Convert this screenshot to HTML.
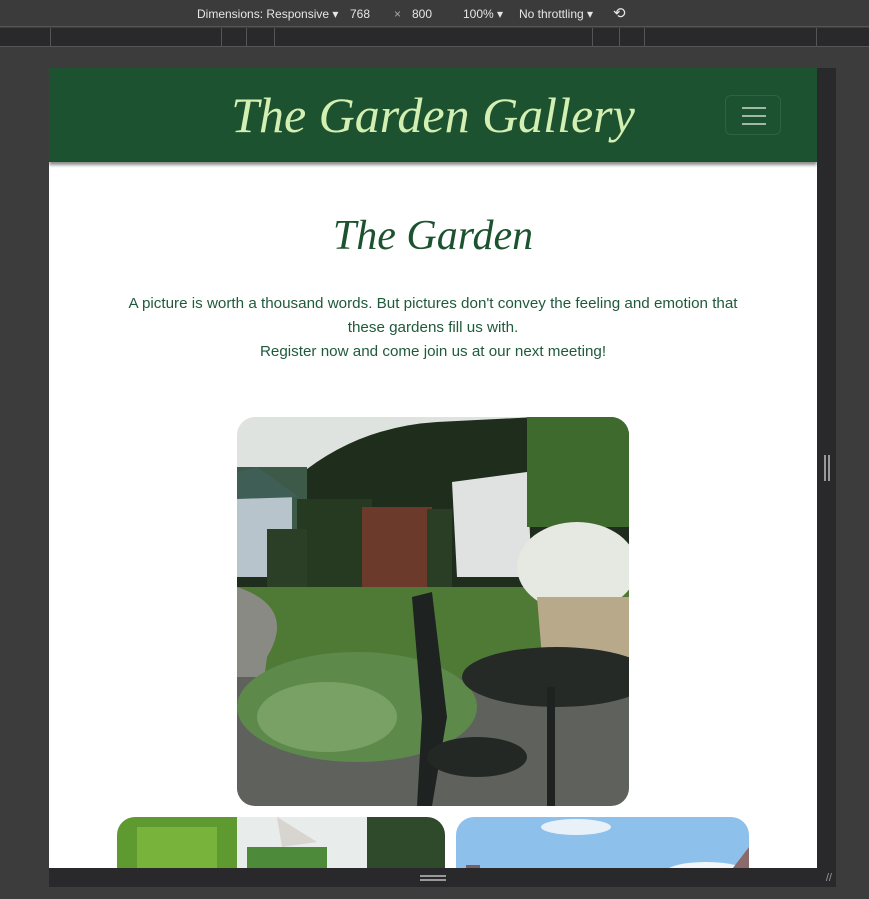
<!DOCTYPE html>
<html><head><meta charset="utf-8"><style>
*{margin:0;padding:0;box-sizing:border-box}
body{width:869px;height:899px;background:#3c3c3c;position:relative;overflow:hidden;font-family:"Liberation Sans",sans-serif}
.top{position:absolute;left:0;top:0;width:869px;height:27px;background:#3b3b3b;border-bottom:1px solid #555;color:#e6e6e6;font-size:12px}
.top span{position:absolute;top:7px}
.ruler{position:absolute;left:0;top:28px;width:869px;height:19px;background:#29292b;border-bottom:1px solid #555}
.ruler i{position:absolute;top:0;width:1px;height:19px;background:#555}
.vp{position:absolute;left:49px;top:68px;width:768px;height:800px;background:#fff;overflow:hidden}
.sb{position:absolute;left:817px;top:68px;width:19px;height:800px;background:#29292b}
.bot{position:absolute;left:49px;top:868px;width:787px;height:19px;background:#29292b}
header{position:absolute;left:0;top:0;width:768px;height:94px;background:#1d5230;box-shadow:0 3px 3px rgba(0,0,0,.45)}
header h1{position:absolute;left:0;width:768px;text-align:center;top:18px;font-family:"Liberation Serif",serif;font-style:italic;font-weight:normal;font-size:50px;color:#d4efb2;letter-spacing:0}
.burger{position:absolute;left:676px;top:27px;width:56px;height:40px;border:1px solid #2e6340;border-radius:6px}
.burger b{position:absolute;left:16px;width:24px;height:2px;background:#9fb9a4}
h2{position:absolute;left:0;width:768px;top:144px;text-align:center;font-family:"Liberation Serif",serif;font-style:italic;font-weight:normal;font-size:42px;color:#1d5230}
p{position:absolute;left:48px;width:672px;top:224px;text-align:center;font-size:15.2px;line-height:24px;color:#1f5a3b}
.img{position:absolute;overflow:hidden}
</style></head><body>
<div class="top"><span style="left:197px">Dimensions: Responsive ▾</span><span style="left:350px">768</span><span style="left:394px;color:#aaa">×</span><span style="left:412px">800</span><span style="left:463px">100% ▾</span><span style="left:519px">No throttling ▾</span><span style="left:613px;font-size:15px;top:4px">⟲</span></div>
<div class="ruler"><i style="left:50px"></i><i style="left:221px"></i><i style="left:246px"></i><i style="left:274px"></i><i style="left:592px"></i><i style="left:619px"></i><i style="left:644px"></i><i style="left:816px"></i></div>
<div class="vp">
<header><h1>The Garden Gallery</h1><div class="burger"><b style="top:11px"></b><b style="top:19px"></b><b style="top:27px"></b></div></header>
<h2>The Garden</h2>
<p>A picture is worth a thousand words. But pictures don't convey the feeling and emotion that<br>these gardens fill us with.<br>Register now and come join us at our next meeting!</p>
<div class="img" style="left:188px;top:349px;width:392px;height:389px;border-radius:18px">
<svg width="392" height="389" viewBox="0 0 392 389">
<rect width="392" height="389" fill="#dfe3df"/>
<path d="M60 60 Q120 10 200 5 L300 0 L392 0 L392 200 L0 200 L0 60Z" fill="#1f2e1c"/>
<rect x="0" y="50" width="70" height="110" fill="#3d5a48"/>
<rect x="0" y="80" width="55" height="80" fill="#b8c4cc"/>
<path d="M0 55 L20 50 L62 80 L0 82Z" fill="#3f5e55"/>
<rect x="60" y="82" width="75" height="100" fill="#263a22"/>
<rect x="30" y="112" width="40" height="70" fill="#2a3f26"/>
<rect x="125" y="90" width="70" height="90" fill="#6b3a2b"/>
<rect x="190" y="92" width="25" height="85" fill="#2a3d25"/>
<path d="M215 65 L290 55 L295 160 L220 160Z" fill="#dfe2e0"/>
<rect x="290" y="0" width="102" height="110" fill="#3e6a2e"/>
<path d="M0 170 L392 170 L392 260 L0 260Z" fill="#4f7a36"/>
<path d="M0 170 Q60 190 30 240 L10 389 L0 389Z" fill="#8a8a85"/>
<ellipse cx="340" cy="150" rx="60" ry="45" fill="#e6e8e2"/>
<path d="M300 180 L392 180 L392 240 L305 240Z" fill="#b8a98a"/>
<path d="M0 260 L392 260 L392 389 L0 389Z" fill="#5f625c"/>
<ellipse cx="120" cy="290" rx="120" ry="55" fill="#5d8a4a"/>
<ellipse cx="90" cy="300" rx="70" ry="35" fill="#7aa165"/>
<ellipse cx="320" cy="260" rx="95" ry="30" fill="#252a27"/>
<path d="M175 180 L195 175 L210 300 L195 389 L180 389 L185 300Z" fill="#1e2220"/>
<ellipse cx="240" cy="340" rx="50" ry="20" fill="#232824"/>
<rect x="310" y="270" width="8" height="119" fill="#1e2220"/>
</svg></div>
<div class="img" style="left:68px;top:749px;width:328px;height:60px;border-radius:18px 18px 0 0">
<svg width="328" height="60"><rect width="328" height="60" fill="#e8ecea"/><rect width="120" height="60" fill="#5e9a2f"/><rect x="20" y="10" width="80" height="50" fill="#78b43c"/><path d="M160 0 L200 25 L165 30Z" fill="#d8d4d0"/><rect x="130" y="30" width="80" height="30" fill="#4d8a3a"/><rect x="250" y="0" width="78" height="60" fill="#2e4a2a"/></svg></div>
<div class="img" style="left:407px;top:749px;width:293px;height:60px;border-radius:18px 18px 0 0">
<svg width="293" height="60"><rect width="293" height="60" fill="#8ec0ec"/><ellipse cx="120" cy="10" rx="35" ry="8" fill="#e8f0f8"/><ellipse cx="250" cy="55" rx="40" ry="10" fill="#f2f6fa"/><path d="M270 60 L293 30 L293 60Z" fill="#8a6a6a"/><rect x="10" y="48" width="14" height="12" fill="#7a6060"/></svg></div>
</div>
<div class="sb"><div style="position:absolute;left:7px;top:387px;width:2px;height:26px;background:#999"></div><div style="position:absolute;left:11px;top:387px;width:2px;height:26px;background:#999"></div></div>
<div class="bot"><div style="position:absolute;left:371px;top:7px;width:26px;height:2px;background:#999"></div><div style="position:absolute;left:371px;top:11px;width:26px;height:2px;background:#999"></div><div style="position:absolute;right:4px;top:4px;color:#999;font-size:11px">//</div></div>
</body></html>
